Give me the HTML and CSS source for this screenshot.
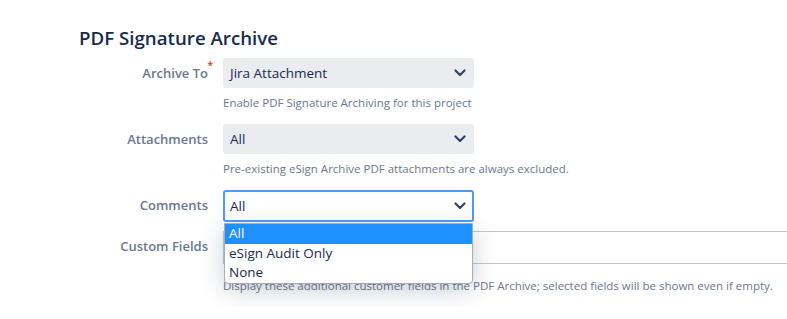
FILE: index.html
```html
<!DOCTYPE html>
<html lang="en">
<head>
    <meta charset="UTF-8">
    <title>PDF Signature Archive</title>
    <link rel="stylesheet" href="styles.css">
</head>
<body>
<div class="archive-form">
    <h2>PDF Signature Archive</h2>

    <div class="field-row">
        <label class="field-label">Archive To<span class="required">*</span></label>
        <div class="field-body">
            <div class="select">
                <span>Jira Attachment</span>
                <svg class="chevron" width="12" height="8" viewBox="0 0 12 8"><path d="M1.5 1.5 L6 6 L10.5 1.5" fill="none" stroke="#344563" stroke-width="2.2" stroke-linecap="round" stroke-linejoin="round"/></svg>
            </div>
            <p class="help">Enable PDF Signature Archiving for this project</p>
        </div>
    </div>

    <div class="field-row">
        <label class="field-label">Attachments</label>
        <div class="field-body">
            <div class="select">
                <span>All</span>
                <svg class="chevron" width="12" height="8" viewBox="0 0 12 8"><path d="M1.5 1.5 L6 6 L10.5 1.5" fill="none" stroke="#344563" stroke-width="2.2" stroke-linecap="round" stroke-linejoin="round"/></svg>
            </div>
            <p class="help">Pre-existing eSign Archive PDF attachments are always excluded.</p>
        </div>
    </div>

    <div class="field-row no-help">
        <label class="field-label">Comments</label>
        <div class="field-body dropdown-wrap">
            <div class="select focused">
                <span>All</span>
                <svg class="chevron" width="12" height="8" viewBox="0 0 12 8"><path d="M1.5 1.5 L6 6 L10.5 1.5" fill="none" stroke="#344563" stroke-width="2.2" stroke-linecap="round" stroke-linejoin="round"/></svg>
            </div>
            <ul class="dropdown">
                <li class="active">All</li>
                <li>eSign Audit Only</li>
                <li>None</li>
            </ul>
        </div>
    </div>

    <div class="field-row">
        <label class="field-label">Custom Fields</label>
        <div class="field-body">
            <div class="multi-input"></div>
            <p class="help">Display these additional customer fields in the PDF Archive; selected fields will be shown even if empty.</p>
        </div>
    </div>
</div>
</body>
</html>
```

FILE: styles.css
```css
body {
    margin: 0;
    padding: 25px 0 0 79px;
    font-family: "Open Sans", "Noto Sans", Arial, sans-serif;
    color: #172b4d;
    background: #fff;
    overflow: hidden;
}
h2 {
    margin: 0 0 7px;
    font-size: 18.7px;
    font-weight: 600;
    line-height: 26px;
}
.field-row {
    display: flex;
    gap: 15px;
    margin-bottom: 13px;
}
.field-row.no-help {
    margin-bottom: 9px;
}
.field-label {
    position: relative;
    width: 129px;
    text-align: right;
    font-size: 13px;
    font-weight: 600;
    color: #6b778c;
    line-height: 30px;
}
.required {
    position: absolute;
    top: -8px;
    right: -5px;
    color: #de350b;
    font-size: 10px;
}
.field-body {
    width: 251px;
}
.select {
    display: flex;
    align-items: center;
    justify-content: space-between;
    height: 30px;
    padding: 0 8px 0 7px;
    background: #ebecf0;
    border-radius: 3px;
    font-size: 13.5px;
    color: #172b4d;
    box-sizing: border-box;
}
.select.focused {
    height: 32px;
    background: #fff;
    border: 2px solid #4c9aff;
    padding: 0 6px 0 5px;
}
.help {
    margin: 7px 0 0;
    font-size: 11.5px;
    line-height: 16px;
    color: #6b778c;
    white-space: nowrap;
}
.dropdown-wrap {
    position: relative;
}
.dropdown {
    position: absolute;
    top: 33px;
    left: 1px;
    right: 1px;
    margin: 0;
    padding: 0;
    list-style: none;
    background: #fff;
    border: 1px solid #a5adba;
    border-radius: 0 0 4px 4px;
    box-shadow: 0 6px 24px rgba(9, 30, 66, 0.22);
    z-index: 2;
    font-size: 13.5px;
    color: #172b4d;
}
.dropdown li {
    height: 19.5px;
    line-height: 19.5px;
    padding: 0 4px;
}
.dropdown li.active {
    background: #1e90ff;
    color: #fff;
}
.multi-input {
    width: 620px;
    height: 33px;
    border: 1px solid #c1c7d0;
    box-sizing: border-box;
}
.multi-input + .help {
    margin-top: 14px;
}
```
